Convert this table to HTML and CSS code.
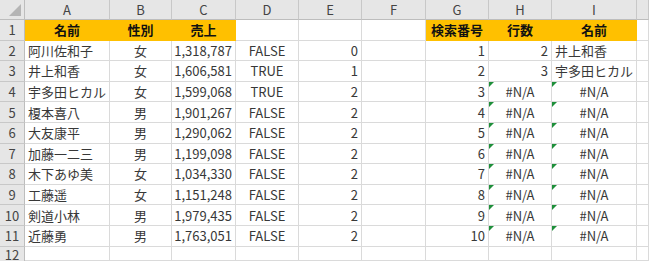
FILE: index.html
```html
<!DOCTYPE html>
<html lang="ja">
<head>
<meta charset="utf-8">
<link rel="stylesheet" href="styles.css">
</head>
<body>
<div class="sheet">
  <div class="ch corner"><span class="tri"></span></div>
  <div class="ch">A</div><div class="ch">B</div><div class="ch">C</div><div class="ch">D</div><div class="ch">E</div><div class="ch">F</div><div class="ch">G</div><div class="ch">H</div><div class="ch">I</div><div class="ch"></div>

  <div class="rh">1</div>
  <div class="c hd">名前</div><div class="c hd">性別</div><div class="c hd">売上</div><div class="c"></div><div class="c"></div><div class="c"></div><div class="c hd">検索番号</div><div class="c hd">行数</div><div class="c hd">名前</div><div class="c"></div>

  <div class="rh">2</div>
  <div class="c l">阿川佐和子</div><div class="c m">女</div><div class="c r">1,318,787</div><div class="c m">FALSE</div><div class="c r">0</div><div class="c"></div><div class="c r">1</div><div class="c r">2</div><div class="c l">井上和香</div><div class="c"></div>

  <div class="rh">3</div>
  <div class="c l">井上和香</div><div class="c m">女</div><div class="c r">1,606,581</div><div class="c m">TRUE</div><div class="c r">1</div><div class="c"></div><div class="c r">2</div><div class="c r">3</div><div class="c l">宇多田ヒカル</div><div class="c"></div>

  <div class="rh">4</div>
  <div class="c l">宇多田ヒカル</div><div class="c m">女</div><div class="c r">1,599,068</div><div class="c m">TRUE</div><div class="c r">2</div><div class="c"></div><div class="c r">3</div><div class="c m err">#N/A</div><div class="c m err">#N/A</div><div class="c"></div>

  <div class="rh">5</div>
  <div class="c l">榎本喜八</div><div class="c m">男</div><div class="c r">1,901,267</div><div class="c m">FALSE</div><div class="c r">2</div><div class="c"></div><div class="c r">4</div><div class="c m err">#N/A</div><div class="c m err">#N/A</div><div class="c"></div>

  <div class="rh">6</div>
  <div class="c l">大友康平</div><div class="c m">男</div><div class="c r">1,290,062</div><div class="c m">FALSE</div><div class="c r">2</div><div class="c"></div><div class="c r">5</div><div class="c m err">#N/A</div><div class="c m err">#N/A</div><div class="c"></div>

  <div class="rh">7</div>
  <div class="c l">加藤一二三</div><div class="c m">男</div><div class="c r">1,199,098</div><div class="c m">FALSE</div><div class="c r">2</div><div class="c"></div><div class="c r">6</div><div class="c m err">#N/A</div><div class="c m err">#N/A</div><div class="c"></div>

  <div class="rh">8</div>
  <div class="c l">木下あゆ美</div><div class="c m">女</div><div class="c r">1,034,330</div><div class="c m">FALSE</div><div class="c r">2</div><div class="c"></div><div class="c r">7</div><div class="c m err">#N/A</div><div class="c m err">#N/A</div><div class="c"></div>

  <div class="rh">9</div>
  <div class="c l">工藤遥</div><div class="c m">女</div><div class="c r">1,151,248</div><div class="c m">FALSE</div><div class="c r">2</div><div class="c"></div><div class="c r">8</div><div class="c m err">#N/A</div><div class="c m err">#N/A</div><div class="c"></div>

  <div class="rh">10</div>
  <div class="c l">剣道小林</div><div class="c m">男</div><div class="c r">1,979,435</div><div class="c m">FALSE</div><div class="c r">2</div><div class="c"></div><div class="c r">9</div><div class="c m err">#N/A</div><div class="c m err">#N/A</div><div class="c"></div>

  <div class="rh">11</div>
  <div class="c l">近藤勇</div><div class="c m">男</div><div class="c r">1,763,051</div><div class="c m">FALSE</div><div class="c r">2</div><div class="c"></div><div class="c r">10</div><div class="c m err">#N/A</div><div class="c m err">#N/A</div><div class="c"></div>

  <div class="rh last">12</div>
  <div class="c"></div><div class="c"></div><div class="c"></div><div class="c"></div><div class="c"></div><div class="c"></div><div class="c"></div><div class="c"></div><div class="c"></div><div class="c"></div>
</div>
</body>
</html>
```

FILE: styles.css
```css
html, body {
  margin: 0;
  padding: 0;
  background: #ffffff;
  overflow: hidden;
}
body {
  width: 649px;
  height: 261px;
  font-family: "Noto Sans CJK JP", "Noto Sans", sans-serif;
  font-size: 13px;
  color: #383838;
}
.sheet {
  display: grid;
  grid-template-columns: 25px 85px 62px 64px 63px 63px 64px 63px 63px 85px 12px;
  grid-template-rows: 20px repeat(11, 20.6px) 14.4px;
}
.ch, .rh, .c {
  box-sizing: border-box;
  display: flex;
  align-items: center;
  white-space: nowrap;
  overflow: hidden;
  line-height: 1;
}
.ch {
  background: #e6e6e6;
  border-right: 1px solid #c8c8c8;
  border-bottom: 1px solid #bdbdbd;
  justify-content: center;
  color: #444444;
  font-size: 13px;
}
.corner {
  position: relative;
  border-right: 1px solid #bdbdbd;
}
.tri {
  position: absolute;
  right: 3px;
  bottom: 3px;
  width: 0;
  height: 0;
  border-left: 12px solid transparent;
  border-bottom: 12px solid #b5b5b5;
}
.rh {
  background: #e6e6e6;
  border-right: 1px solid #bdbdbd;
  border-bottom: 1px solid #c8c8c8;
  justify-content: center;
  color: #444444;
  font-size: 13px;
}
.last {
  align-items: flex-start;
  padding-top: 1px;
  border-bottom: 0;
}
.c {
  border-right: 1px solid #dadada;
  border-bottom: 1px solid #dadada;
  padding: 0 3px;
  position: relative;
}
.hd {
  background: #ffc000;
  border-color: #ffc000;
  font-weight: 700;
  color: #111111;
  justify-content: center;
}
.l { justify-content: flex-start; }
.m { justify-content: center; }
.r { justify-content: flex-end; }
.err::before {
  content: "";
  position: absolute;
  left: 0;
  top: 0;
  width: 0;
  height: 0;
  border-top: 5px solid #1e8f3a;
  border-right: 5px solid transparent;
}
```
